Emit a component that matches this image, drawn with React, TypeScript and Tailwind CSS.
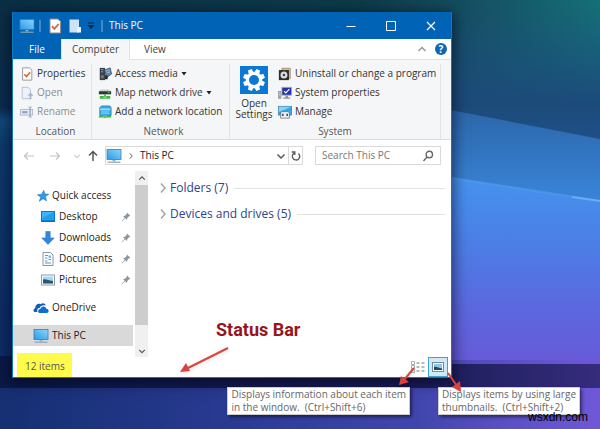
import type { ReactNode } from "react";

interface IconProps {
  className?: string;
}

const MonitorIcon = ({ className = "w-4 h-4" }: IconProps) => (
  <svg viewBox="0 0 16 16" className={className} aria-hidden="true">
    <defs>
      <linearGradient id="screen" x1="0" y1="1" x2="1" y2="0">
        <stop offset="0" stopColor="#2b9be6" />
        <stop offset="1" stopColor="#8ad6fb" />
      </linearGradient>
    </defs>
    <rect x="1" y="1.5" width="14" height="10" fill="url(#screen)" stroke="#3b7fae" strokeWidth="0.8" />
    <path d="M6.5 12h3v1.4h-3z" fill="#8fb2c8" />
    <path d="M1.5 14.2h13" stroke="#8aa6b8" strokeWidth="1.2" />
  </svg>
);

const PropertiesIcon = ({ className = "w-4 h-4" }: IconProps) => (
  <svg viewBox="0 0 16 16" className={className} aria-hidden="true">
    <path d="M3 1h8l2.5 2.5V15H3z" fill="#fff" stroke="#8a8f96" />
    <path d="M5 8.2l2.4 2.6L11.6 6" fill="none" stroke="#e2622a" strokeWidth="1.8" />
  </svg>
);

const NewFolderIcon = ({ className = "w-4 h-4" }: IconProps) => (
  <svg viewBox="0 0 16 16" className={className} aria-hidden="true">
    <path d="M2.5 1.5H12v13H2.5z" fill="#cfe3f6" />
    <path d="M10 9h4v5.5h-4z" fill="#eef5fc" />
  </svg>
);

const OpenIcon = () => (
  <svg viewBox="0 0 16 16" className="w-4 h-4" aria-hidden="true">
    <path d="M2.5 1.5h7l2.5 2.5v10.500h-9.500z" fill="#edf1f9" stroke="#b3bdd2" />
    <path d="M11 15V11H8.500L12 7.500l3.500 3.500H13v4z" fill="#a5b2cf" />
  </svg>
);

const RenameIcon = () => (
  <svg viewBox="0 0 16 16" className="w-4 h-4" aria-hidden="true">
    <rect x="0.5" y="5" width="14" height="6.5" fill="#e7ebf4" stroke="#a9b5cf" />
    <rect x="2.5" y="7" width="6" height="2.5" fill="#8f9fc4" />
    <path d="M9.500 2q2 0 2 1.500v9q0 1.500-2 1.500M13.500 2q-2 0-2 1.500v9q0 1.500 2 1.500" fill="none" stroke="#97a5c4" />
  </svg>
);

const MediaIcon = () => (
  <svg viewBox="0 0 16 16" className="w-4 h-4" aria-hidden="true">
    <path d="M2 1h6v14H2z" fill="#3a4148" />
    <path d="M3.500 3H6M3.500 5.500H6" stroke="#a8b4bd" />
    <path d="M7 3.500l7-2.500 1.500 7L10 12z" fill="#5b86ab" stroke="#33424e" strokeWidth="0.8" />
    <path d="M9 4.500l4-1.200M10 7l4-1.500" stroke="#b5d4ec" strokeWidth="0.8" />
    <circle cx="5" cy="11" r="2" fill="#6d7780" />
    <path d="M8 9.500h3V14H8z" fill="#222a31" />
  </svg>
);

const DriveIcon = () => (
  <svg viewBox="0 0 16 16" className="w-4 h-4" aria-hidden="true">
    <path d="M3.500 4h9L15 6H1z" fill="#c8ccd0" />
    <path d="M1 6h14v3.500H1z" fill="#2f3437" />
    <path d="M11 7.500h2.500" stroke="#42e05c" />
    <path d="M7 9.500h2v2h5v3H2v-3h5z" fill="#43b34a" />
    <path d="M6 12h4v2H6z" fill="#79d67b" />
  </svg>
);

const NetworkPlaceIcon = () => (
  <svg viewBox="0 0 16 16" className="w-4 h-4" aria-hidden="true">
    <path d="M4 1h9.500l1.500 2v9H2V3z" fill="#3aa7e3" stroke="#2278ad" strokeWidth="0.8" />
    <path d="M2.500 4H14v2H2.500z" fill="#9adcfa" />
    <path d="M3.500 6.500h9.500v4H3.500z" fill="#5fc2f2" />
    <path d="M1 13.500h5M10 13.500h5" stroke="#43b34a" strokeWidth="1.6" />
    <path d="M6 12h4v3H6z" fill="#5cc763" />
  </svg>
);

const SettingsIcon = () => (
  <svg viewBox="0 0 28 28" className="w-7 h-7 bg-[#0b78d4]" aria-hidden="true">
    <g fill="#fff">
      <circle cx="14" cy="14" r="8.2" />
      {[0, 45, 90, 135, 180, 225, 270, 315].map((angle) => (
        <path key={angle} d="M12 3h4l.8 5h-5.600z" transform={`rotate(${angle + 22.5} 14 14)`} />
      ))}
    </g>
    <circle cx="14" cy="14" r="5" fill="#0b78d4" />
  </svg>
);

const UninstallIcon = () => (
  <svg viewBox="0 0 16 16" className="w-4 h-4" aria-hidden="true">
    <path d="M4.500 1.500H14V13H4.500z" fill="#dcc48a" stroke="#8b7a4c" strokeWidth="0.8" />
    <rect x="1" y="3.5" width="11.5" height="11.5" fill="#2c2c2c" />
    <circle cx="6.8" cy="9.2" r="4" fill="#d9dde0" />
    <circle cx="6.8" cy="9.2" r="1.4" fill="#3c3c3c" />
  </svg>
);

const SystemIcon = () => (
  <svg viewBox="0 0 16 16" className="w-4 h-4" aria-hidden="true">
    <rect x="0.5" y="6" width="3" height="8.5" fill="#b9bdc2" stroke="#7c828a" strokeWidth="0.6" />
    <path d="M1 12.500h1.500" stroke="#38b44a" />
    <rect x="4.5" y="1.5" width="11" height="9" fill="#2434a8" stroke="#a5abb4" />
    <path d="M7 6l2 2 4-4.500" fill="none" stroke="#fff" strokeWidth="1.3" />
    <path d="M8.500 11h3v2h2.500v1.500H6V13h2.500z" fill="#8f959c" />
  </svg>
);

const ManageIcon = () => (
  <svg viewBox="0 0 16 16" className="w-4 h-4" aria-hidden="true">
    <rect x="0.5" y="1.5" width="15" height="10" fill="#3aa5e6" stroke="#357ba6" strokeWidth="0.8" />
    <path d="M1 2h14L1 8z" fill="#8ad2f8" />
    <path d="M3 9l1.500-1.500h7L13 9v6H3z" fill="#eceff1" stroke="#5c656c" strokeWidth="0.8" />
    <path d="M5.500 10v2.500M10.500 10v2.500" stroke="#2a3238" strokeWidth="1.5" />
  </svg>
);

const StarIcon = () => (
  <svg viewBox="0 0 16 16" className="w-3 h-3" aria-hidden="true">
    <path d="M9 .5l1.600 4.800 5 .4-4.200 3 1.200 5.800-4.300-3L3 15l2-5.300L.5 6.300l5.500-.4z" fill="#2d9be8" stroke="#1c78c4" strokeWidth="0.8" />
  </svg>
);

const DesktopIcon = () => (
  <svg viewBox="0 0 14 12" className="w-3.5 h-3" aria-hidden="true">
    <rect x="0.5" y="0.5" width="13" height="10" fill="#1ba0f2" stroke="#0f77c4" />
    <path d="M1 1h12L1 7z" fill="#3fb4fa" />
    <path d="M1 10h12" stroke="#0d5fa8" />
  </svg>
);

const DownloadIcon = () => (
  <svg viewBox="0 0 14 14" className="w-3.5 h-3.5" aria-hidden="true">
    <path d="M4.800.5h4.400V7h4L7 13.500.8 7h4z" fill="#3188d8" stroke="#2a77c2" strokeWidth="0.6" />
  </svg>
);

const DocumentIcon = () => (
  <svg viewBox="0 0 14 14" className="w-3.5 h-3.5" aria-hidden="true">
    <path d="M2 .5h7.500l2.500 2.500v10.500H2z" fill="#fff" stroke="#8795a3" />
    <path d="M4 3.500h3M4 6h2.500M7.500 7.500H10M4 9h2.500M4 11h6" stroke="#4a9bd8" strokeWidth="1.2" />
    <path d="M7.500 3.500H10v2.500H7.500z" fill="#77b9e8" />
  </svg>
);

const PictureIcon = () => (
  <svg viewBox="0 0 14 12" className="w-3.5 h-3" aria-hidden="true">
    <rect x="0.5" y="1" width="13" height="10" fill="#fff" stroke="#8f9aa4" />
    <rect x="2" y="2.5" width="10" height="7" fill="#a8d5f5" />
    <path d="M2 5.500c3-1 5 1 10 1.500v2.500H2z" fill="#28586e" />
  </svg>
);

const OneDriveIcon = () => (
  <svg viewBox="0 0 16 12" className="w-4 h-3" aria-hidden="true">
    <path d="M1.800 10C0 9.500 0 6.700 2.200 6.200 2.200 3 5 1 7.700 2.200 9 .5 12 .8 12.800 3.500 9.500 2.800 7.500 4 6.600 6 4.300 6 3.800 8.500 4.500 10z" fill="#0f5fb8" />
    <path d="M7 11c-2.500 0-2.500-3.800.3-4C8 3.800 12.500 3.500 13.300 6.800 16.300 6.700 16.400 11 13.800 11z" fill="#0f6fce" />
  </svg>
);

const PinIcon = () => (
  <svg viewBox="0 0 10 10" className="w-2.5 h-2.5" aria-hidden="true">
    <path d="M6 .5L9.500 4 8 4.300 6.300 6 6 8 4.200 6.300.8 9.500.5 9.200 3.700 5.800 2 4l2-.3L5.700 2z" fill="#8a959e" />
  </svg>
);

const ThumbnailIcon = () => (
  <svg viewBox="0 0 14 12" className="w-3.5 h-3" aria-hidden="true">
    <rect x="1.5" y="1.5" width="11" height="9" fill="#f4f9fd" stroke="#7a8b98" />
    <rect x="3" y="3" width="8" height="6" fill="#8fc6ee" />
    <path d="M3 6c3-1 4 1 8 1.500V9H3z" fill="#1e4a66" />
  </svg>
);

const DetailsIcon = () => (
  <svg viewBox="0 0 14 12" className="w-3.5 h-3" aria-hidden="true">
    <path d="M.5.500h3v3h-3zM.5 4.500h3v3h-3zM.5 8.500h3v3h-3z" fill="#fff" stroke="#999" strokeWidth="0.8" />
    <path d="M5.500 2h3M10.500 2h3M5.500 6h3M10.500 6h3M5.500 10h3M10.500 10h3" stroke="#777" />
  </svg>
);

interface ChevronProps {
  d: string;
  color?: string;
  className?: string;
}

const Chevron = ({ d, color = "#555", className = "w-2.5 h-2.5" }: ChevronProps) => (
  <svg viewBox="0 0 10 10" className={className} fill="none" stroke={color} strokeWidth="1.5" aria-hidden="true">
    <path d={d} />
  </svg>
);

const UP = "M1.500 7L5 3.500 8.500 7";
const DOWN = "M1.500 3.500L5 7l3.500-3.500";
const RIGHT = "M3 .5L7 5 3 9.500";

const Caret = () => (
  <svg viewBox="0 0 6 4" className="w-1.5 h-1" aria-hidden="true">
    <path d="M.5 0h5L3 3.500z" fill="#222" />
  </svg>
);

interface RibbonButtonProps {
  icon: ReactNode;
  label: string;
  menu?: boolean;
  disabled?: boolean;
}

const RibbonButton = ({ icon, label, menu, disabled }: RibbonButtonProps) => (
  <button
    type="button"
    disabled={disabled}
    className="flex h-[19px] items-center gap-[3px] whitespace-nowrap text-[#333] disabled:text-[#8d8d8d]"
  >
    <span className="flex w-3.5 justify-center">{icon}</span>
    {label}
    {menu && <Caret />}
  </button>
);

interface RibbonGroupProps {
  title: string;
  className: string;
  children: ReactNode;
}

const RibbonGroup = ({ title, className, children }: RibbonGroupProps) => (
  <section className={`flex flex-col border-r border-[#e0e2e4] ${className}`}>
    <div className="flex">{children}</div>
    <h2 className="h-[18px] text-center leading-5 text-[#555]">{title}</h2>
  </section>
);

const quickAccess = [
  { label: "Desktop", icon: <DesktopIcon /> },
  { label: "Downloads", icon: <DownloadIcon /> },
  { label: "Documents", icon: <DocumentIcon /> },
  { label: "Pictures", icon: <PictureIcon /> },
];

const Wallpaper = () => (
  <svg viewBox="0 0 600 429" preserveAspectRatio="none" className="absolute inset-0 w-full h-full" aria-hidden="true">
    <defs>
      <linearGradient id="sky" x1="0" y1="0" x2="1" y2="0">
        <stop offset="0" stopColor="#0a2f45" />
        <stop offset="0.6" stopColor="#0d3b4a" />
        <stop offset="0.8" stopColor="#155163" />
        <stop offset="1" stopColor="#147078" />
      </linearGradient>
      <linearGradient id="dusk" x1="0" y1="0" x2="0" y2="1">
        <stop offset="0" stopColor="#1d4f7e" stopOpacity="0" />
        <stop offset="0.75" stopColor="#1c4a7a" />
        <stop offset="1" stopColor="#1f5088" />
      </linearGradient>
      <linearGradient id="band" x1="0" y1="0" x2="0" y2="1">
        <stop offset="0" stopColor="#2b66a8" />
        <stop offset="1" stopColor="#3a86dc" />
      </linearGradient>
      <linearGradient id="glow" x1="0" y1="0" x2="0" y2="1">
        <stop offset="0" stopColor="#4593ee" />
        <stop offset="0.35" stopColor="#4c7ee6" />
        <stop offset="0.7" stopColor="#5d66de" />
        <stop offset="1" stopColor="#6a57d6" />
      </linearGradient>
      <linearGradient id="left" x1="0" y1="0" x2="0" y2="1">
        <stop offset="0" stopColor="#0b2f45" />
        <stop offset="0.23" stopColor="#0b2c50" />
        <stop offset="0.26" stopColor="#124a7c" />
        <stop offset="0.32" stopColor="#0d3a6c" />
        <stop offset="0.75" stopColor="#0e2c66" />
      </linearGradient>
      <linearGradient id="ground" x1="0" y1="0" x2="1" y2="0">
        <stop offset="0" stopColor="#152f72" />
        <stop offset="0.35" stopColor="#27398f" />
        <stop offset="0.7" stopColor="#4146ae" />
        <stop offset="0.85" stopColor="#5c50c4" />
        <stop offset="1" stopColor="#6f58d8" />
      </linearGradient>
      <linearGradient id="shelf" x1="0" y1="0" x2="1" y2="0">
        <stop offset="0" stopColor="#0a1a48" />
        <stop offset="0.7" stopColor="#1b1d58" />
        <stop offset="1" stopColor="#352c7c" />
      </linearGradient>
    </defs>
    <rect width="600" height="429" fill="url(#sky)" />
    <rect x="440" width="160" height="140" fill="url(#dusk)" />
    <path d="M440 108L600 139V205L440 178z" fill="url(#band)" />
    <path d="M440 176L600 202V372H440z" fill="url(#glow)" />
    <path d="M440 176L600 201" stroke="#64b0f8" strokeOpacity="0.4" strokeWidth="2" />
    <path d="M572 197l28 4" stroke="#8cc8ff" strokeOpacity="0.5" strokeWidth="2" />
    <rect y="12" width="60" height="417" fill="url(#left)" />
    <rect y="360" width="600" height="69" fill="url(#ground)" />
    <path d="M0 356H440V364H600V388L440 388H0z" fill="url(#shelf)" />
  </svg>
);

interface ArrowProps {
  className: string;
  viewBox: string;
  line: string;
  head: string;
}

const Arrow = ({ className, viewBox, line, head }: ArrowProps) => (
  <svg viewBox={viewBox} className={`absolute drop-shadow-sm ${className}`} aria-hidden="true">
    <path d={line} stroke="#d9433f" strokeWidth="2" />
    <path d={head} fill="#d9433f" />
  </svg>
);

const TitleBar = () => (
  <header className="flex h-[27px] items-center bg-[#0063b5] pl-1.5 text-white">
    <MonitorIcon />
    <span className="ml-1 h-3 w-0.5 bg-[#4a86bf]" />
    <button type="button" aria-label="Properties" className="ml-1.5">
      <PropertiesIcon />
    </button>
    <button type="button" aria-label="New folder" className="ml-1">
      <NewFolderIcon />
    </button>
    <button type="button" aria-label="Customize toolbar" className="ml-1">
      <svg viewBox="0 0 8 8" className="w-2 h-2" aria-hidden="true">
        <path d="M1 1h6" stroke="#10263c" />
        <path d="M.5 3h7L4 7z" fill="#10263c" />
      </svg>
    </button>
    <span className="ml-1.5 h-3 w-0.5 bg-[#4a86bf]" />
    <h1 className="ml-1.5 flex-1">This PC</h1>
    <button type="button" aria-label="Minimize" className="flex w-10 justify-center">
      <svg viewBox="0 0 10 10" className="w-2.5 h-2.5" aria-hidden="true">
        <path d="M.5 5.500h9" stroke="#fff" />
      </svg>
    </button>
    <button type="button" aria-label="Maximize" className="flex w-10 justify-center">
      <svg viewBox="0 0 10 10" className="w-2.5 h-2.5" aria-hidden="true">
        <path d="M.5 .5h9v9h-9z" fill="none" stroke="#fff" />
      </svg>
    </button>
    <button type="button" aria-label="Close" className="flex w-10 justify-center">
      <svg viewBox="0 0 10 10" className="w-2.5 h-2.5" aria-hidden="true">
        <path d="M1 1l8 8M9 1L1 9" stroke="#fff" strokeWidth="1.2" />
      </svg>
    </button>
  </header>
);

const Tabs = () => (
  <div className="flex h-[21px] items-stretch border-b border-[#e0e2e4] text-[#444]">
    <button type="button" className="w-12 bg-[#0063b5] text-white">File</button>
    <button type="button" className="-mb-px w-[69px] border-x border-[#e0e2e4] bg-[#f5f6f7]">Computer</button>
    <button type="button" className="ml-3.5">View</button>
    <button type="button" aria-label="Collapse ribbon" className="ml-auto">
      <Chevron d={UP} color="#999" />
    </button>
    <button type="button" aria-label="Help" className="ml-2 mr-1 flex items-center">
      <span className="flex h-3 w-3 items-center justify-center rounded-full bg-[#0f66b8] font-bold text-white">?</span>
    </button>
  </div>
);

const Ribbon = () => (
  <div className="flex border-b border-[#dadbdc] bg-[#f5f6f7] pt-1">
    <RibbonGroup title="Location" className="w-[79px] pl-[7px]">
      <div>
        <RibbonButton icon={<PropertiesIcon />} label="Properties" />
        <RibbonButton icon={<OpenIcon />} label="Open" disabled />
        <RibbonButton icon={<RenameIcon />} label="Rename" disabled />
      </div>
    </RibbonGroup>
    <RibbonGroup title="Network" className="w-[138px] pl-1.5">
      <div>
        <RibbonButton icon={<MediaIcon />} label="Access media" menu />
        <RibbonButton icon={<DriveIcon />} label="Map network drive" menu />
        <RibbonButton icon={<NetworkPlaceIcon />} label="Add a network location" />
      </div>
    </RibbonGroup>
    <RibbonGroup title="System" className="mr-2.5 flex-1">
      <button type="button" className="flex w-12 flex-col items-center pt-0.5 leading-[11px] text-[#333]">
        <SettingsIcon />
        <span className="pt-1">Open Settings</span>
      </button>
      <div>
        <RibbonButton icon={<UninstallIcon />} label="Uninstall or change a program" />
        <RibbonButton icon={<SystemIcon />} label="System properties" />
        <RibbonButton icon={<ManageIcon />} label="Manage" />
      </div>
    </RibbonGroup>
  </div>
);

const AddressBar = () => (
  <div className="flex items-center pt-1.5 pr-2.5 pl-1">
    <button type="button" aria-label="Back" className="flex w-6 justify-center">
      <svg viewBox="0 0 12 10" className="w-3 h-2.5" fill="none" stroke="#c4c4c4" strokeWidth="1.2" aria-hidden="true">
        <path d="M11 5H1.500M5 1.500L1.500 5 5 8.500" />
      </svg>
    </button>
    <button type="button" aria-label="Forward" className="flex w-7 justify-center">
      <svg viewBox="0 0 12 10" className="w-3 h-2.5" fill="none" stroke="#c4c4c4" strokeWidth="1.2" aria-hidden="true">
        <path d="M1 5h9.500M7 1.500L10.500 5 7 8.500" />
      </svg>
    </button>
    <button type="button" aria-label="Recent locations" className="flex w-4 justify-center">
      <Chevron d={DOWN} color="#ccc" className="w-2 h-2" />
    </button>
    <button type="button" aria-label="Up" className="flex w-4 justify-center">
      <svg viewBox="0 0 12 12" className="w-3 h-3" fill="none" stroke="#555" strokeWidth="1.5" aria-hidden="true">
        <path d="M6 11V1.500M2 5.500l4-4 4 4" />
      </svg>
    </button>
    <div className="ml-1 mr-3 flex h-[19px] flex-1 items-center border border-[#d9d9d9]">
      <MonitorIcon />
      <Chevron d={RIGHT} className="mx-1.5 w-1.5 h-1.5" />
      <button type="button" className="mr-auto text-[#222]">This PC</button>
      <button type="button" aria-label="Previous locations" className="mr-0.5">
        <Chevron d={DOWN} />
      </button>
      <button type="button" aria-label="Refresh" className="flex h-full w-3.5 items-center justify-center border-l border-[#d9d9d9]">
        <svg viewBox="0 0 10 10" className="w-2.5 h-2.5" fill="none" stroke="#555" strokeWidth="1.3" aria-hidden="true">
          <path d="M7.500 2.500A3.700 3.700 0 1 1 3 2.200M.8 1h3v3" />
        </svg>
      </button>
    </div>
    <label className="flex h-[19px] w-[126px] items-center border border-[#d9d9d9] px-1.5">
      <input
        type="search"
        aria-label="Search This PC"
        placeholder="Search This PC"
        className="min-w-0 flex-1 outline-none placeholder:text-[#777]"
      />
      <svg viewBox="0 0 12 12" className="w-3 h-3" fill="none" stroke="#666" strokeWidth="1.4" aria-hidden="true">
        <circle cx="7.3" cy="4.5" r="3.2" />
        <path d="M5 7L1.500 11" />
      </svg>
    </label>
  </div>
);

const Sidebar = () => (
  <nav className="w-[122px] pt-3.5 pb-[11px] text-[#222]">
    <a href="#quick-access" className="flex h-[21px] items-center gap-[3px] pl-6">
      <StarIcon />
      Quick access
    </a>
    {quickAccess.map(({ label, icon }) => (
      <a key={label} href={`#${label.toLowerCase()}`} className="flex h-[21px] items-center gap-1 pr-1 pl-7">
        {icon}
        <span className="flex-1">{label}</span>
        <PinIcon />
      </a>
    ))}
    <a href="#onedrive" className="mt-[7px] flex h-[21px] items-center gap-[3px] pl-5">
      <OneDriveIcon />
      OneDrive
    </a>
    <a href="#this-pc" aria-current="page" className="mt-[7px] mr-0.5 flex h-[21px] items-center gap-[3px] bg-[#d9d9d9] pl-5">
      <MonitorIcon />
      This PC
    </a>
  </nav>
);

const ScrollBar = () => (
  <div className="flex w-[13px] flex-col items-center bg-[#f0f0f0]">
    <button type="button" aria-label="Scroll up" className="flex h-3.5 items-center">
      <Chevron d={UP} className="w-2 h-2" />
    </button>
    <div className="w-full flex-1 bg-[#cdcdcd]" />
    <button type="button" aria-label="Scroll down" className="flex h-8 items-end pb-0.5">
      <Chevron d={DOWN} className="w-2 h-2" />
    </button>
  </div>
);

const Content = () => (
  <main className="flex-1 pt-1 pr-1.5 pl-2.5">
    {["Folders (7)", "Devices and drives (5)"].map((title) => (
      <button key={title} type="button" className="flex h-[26px] w-full items-center whitespace-nowrap text-xs text-[#31418f]">
        <Chevron d={RIGHT} color="#a5a5a5" className="mr-0.5 w-2.5 h-2.5" />
        {title}
        <span className="ml-1.5 h-px flex-1 bg-[#e2e2e2]" />
      </button>
    ))}
  </main>
);

const StatusBar = () => (
  <footer className="flex h-5 items-end justify-between">
    <span className="ml-1 h-6 w-[55px] bg-[#fffb4d] pt-1.5 pl-2 text-[#555]">12 items</span>
    <div className="flex items-center gap-0.5 pr-[3px]">
      <button type="button" aria-label="Details view" className="flex h-5 w-4 items-center justify-center">
        <DetailsIcon />
      </button>
      <button type="button" aria-label="Large thumbnails" className="flex h-5 w-5 items-center justify-center border border-[#3fa3cf] bg-[#cfe9f7]">
        <ThumbnailIcon />
      </button>
    </div>
  </footer>
);

const App = () => {
  return (
    <div className="relative min-h-screen overflow-hidden bg-[#152f72] font-['Open_Sans','Noto_Sans',sans-serif] text-[10px]">
      <Wallpaper />
      <div className="relative mt-3 mr-[148px] ml-3">
        <div className="border border-t-0 border-[#0f78b8] bg-white shadow-[0_3px_12px_3px_rgba(0,0,20,0.5)]">
          <TitleBar />
          <Tabs />
          <Ribbon />
          <AddressBar />
          <div className="flex pt-1.5">
            <Sidebar />
            <ScrollBar />
            <Content />
          </div>
          <StatusBar />
        </div>

        <p className="absolute bottom-9 left-[204px] font-['Roboto',sans-serif] text-lg leading-6 font-bold text-[#951620]">
          Status Bar
        </p>
        <div role="tooltip" className="absolute top-full right-[42px] mt-[9px] border border-[#ccc] bg-white px-[3px] leading-[13px] whitespace-nowrap text-[#666] shadow-[2px_2px_3px_rgba(0,0,0,0.5)]">
          Displays information about each item<br />
          in the window.&nbsp; (Ctrl+Shift+6)
        </div>
        <div role="tooltip" className="absolute top-full -right-32 mt-[9px] border border-[#ccc] bg-white px-[3px] leading-[13px] whitespace-nowrap text-[#666] shadow-[2px_2px_3px_rgba(0,0,0,0.5)]">
          Displays items by using large<br />
          thumbnails.&nbsp; (Ctrl+Shift+2)
        </div>
        <Arrow className="bottom-1 left-[168px] h-7 w-[50px]" viewBox="0 0 50 28" line="M48 2L8 22" head="M0 26L6 17l4 8z" />
        <Arrow className="-bottom-2 right-9 h-5 w-[18px]" viewBox="0 0 18 20" line="M16 2L6 14" head="M1 19L3 10l8 6z" />
        <Arrow className="-right-3 -bottom-4 h-6 w-[18px]" viewBox="0 0 18 24" line="M2 3L11 16" head="M15 22L6 17l8-6z" />
      </div>
      <p className="absolute right-3 bottom-1 font-['Liberation_Sans',sans-serif] text-xs leading-4 text-black">wsxdn.com</p>
    </div>
  );
};

export default App;
